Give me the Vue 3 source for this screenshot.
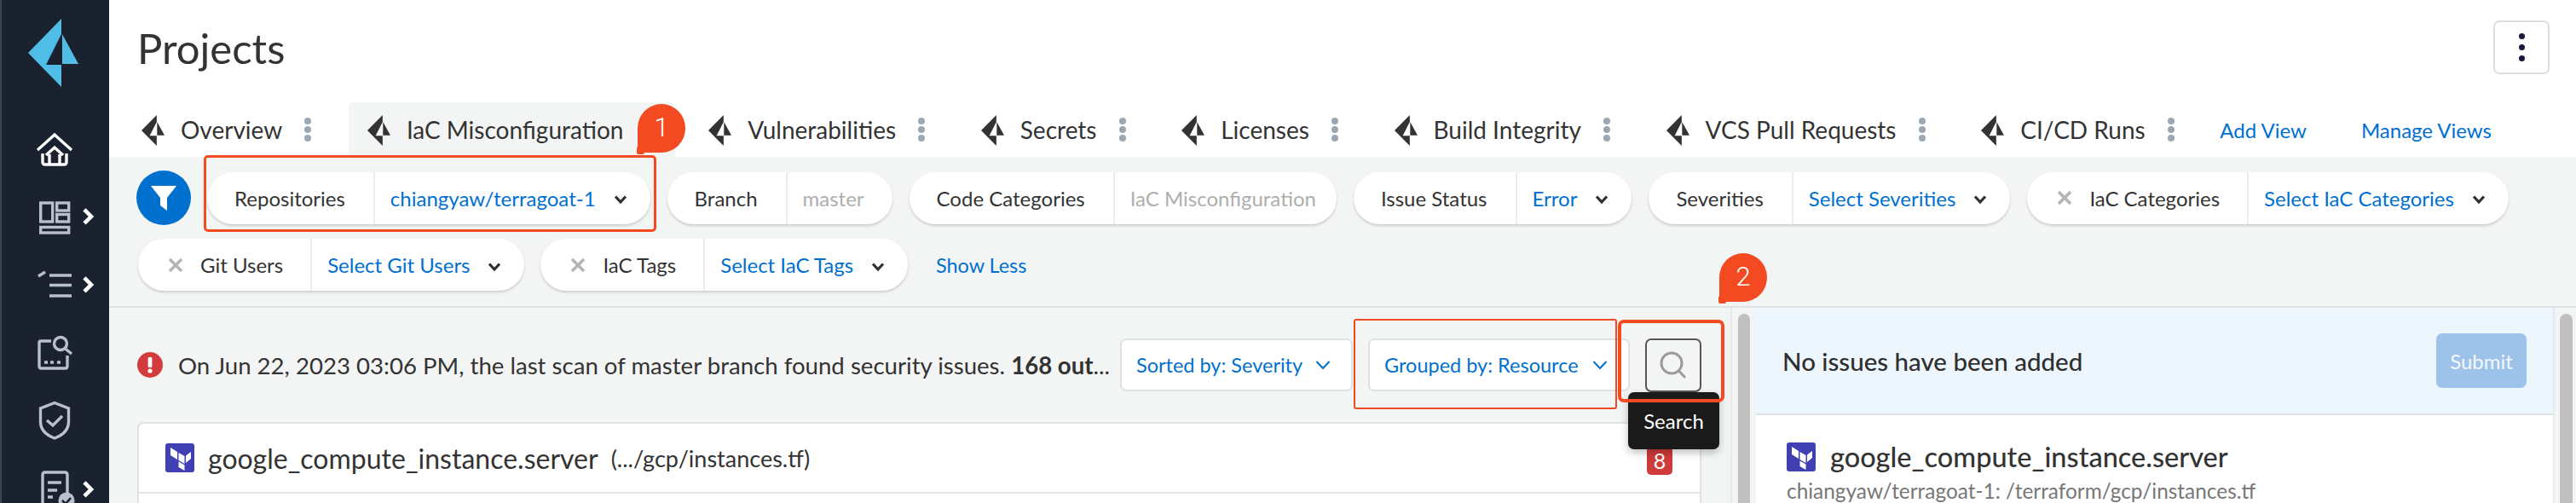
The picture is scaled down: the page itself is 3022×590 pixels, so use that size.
<script setup>
const tabs = [
  { name: 'Overview' },
  { name: 'IaC Misconfiguration', active: true },
  { name: 'Vulnerabilities' },
  { name: 'Secrets' },
  { name: 'Licenses' },
  { name: 'Build Integrity' },
  { name: 'VCS Pull Requests' },
  { name: 'CI/CD Runs' }
]
const row1 = [
  { label: 'Repositories', value: 'chiangyaw/terragoat-1', chevron: true },
  { label: 'Branch', value: 'master', muted: true },
  { label: 'Code Categories', value: 'IaC Misconfiguration', muted: true, tight: true },
  { label: 'Issue Status', value: 'Error', chevron: true },
  { label: 'Severities', value: 'Select Severities', chevron: true },
  { label: 'IaC Categories', value: 'Select IaC Categories', chevron: true, close: true }
]
const row2 = [
  { label: 'Git Users', value: 'Select Git Users', chevron: true, close: true },
  { label: 'IaC Tags', value: 'Select IaC Tags', chevron: true, close: true }
]
</script>

<template>
  <div class="app">
    <aside class="sidebar">
      <svg class="logo" viewBox="0 0 128 135">
        <polygon points="72,22 33,62 72,102 72,76 54,76 72,40" fill="#4fbde6" />
        <polygon points="73,40 92,75 73,75" fill="#4fbde6" />
      </svg>
      <nav class="nav">
        <svg class="nav-icon" viewBox="0 0 128 79.6">
          <g fill="none" stroke="#fff" stroke-width="3.4">
            <path d="M44 41 L64 23 L84 41" />
            <path d="M50 45 V55 Q50 58 53 58 H75 Q78 58 78 55 V45" />
            <path d="M54 47 L64 38 L74 47 M58 46 V57 M70 46 V57" />
          </g>
        </svg>
        <svg class="nav-icon" viewBox="0 0 128 79.6">
          <g fill="none" stroke="#b9bfcc" stroke-width="3.4">
            <rect x="47.7" y="23" width="14" height="22" />
            <rect x="66.7" y="23" width="14" height="9" />
            <rect x="66.7" y="36.5" width="14" height="8.5" />
            <rect x="47.7" y="51.5" width="33" height="6.5" />
          </g>
          <path d="M99 31 L107 39 L99 47" fill="none" stroke="#fff" stroke-width="4.6" />
        </svg>
        <svg class="nav-icon" viewBox="0 0 128 79.6">
          <g fill="none" stroke="#b9bfcc" stroke-width="3.4">
            <path d="M58 29 H84 M58 40.5 H84 M58 53 H84" />
            <path d="M45 30 L53 25" />
          </g>
          <path d="M99 32 L107 40 L99 48" fill="none" stroke="#fff" stroke-width="4.6" />
        </svg>
        <svg class="nav-icon" viewBox="0 0 128 79.6">
          <g fill="none" stroke="#b9bfcc" stroke-width="3.4">
            <path d="M60 26 H48 Q46 26 46 28 V55 Q46 58 48 58 H77 Q79 58 79 55 V43" />
            <circle cx="71" cy="29" r="7.5" />
            <path d="M76.5 35 L84 41" />
            <path d="M52 51 H56 M59 51 H63 M67 51 H71" />
          </g>
        </svg>
        <svg class="nav-icon" viewBox="0 0 128 79.6">
          <g fill="none" stroke="#b9bfcc" stroke-width="3.4">
            <path d="M64 19.5 L80.5 26 V42 C80.5 52 72 58 64 61 C56 58 47.5 52 47.5 42 V26 Z" />
            <path d="M55 40 L62 46 L73 35" />
          </g>
        </svg>
        <svg class="nav-icon" viewBox="0 0 128 79.6">
          <g fill="none" stroke="#b9bfcc" stroke-width="3.4">
            <path d="M50 85 V24 Q50 21 53 21 H76 Q79 21 79 24 V45" />
            <path d="M56 33 H72 M56 42 H67 M56 50 H62" />
          </g>
          <circle cx="78" cy="54" r="9.5" fill="#b9bfcc" />
          <path d="M73 54 L77 58 L83 51" fill="none" stroke="#1a2230" stroke-width="2.6" />
          <path d="M99 33 L107 41 L99 49" fill="none" stroke="#fff" stroke-width="4.6" />
        </svg>
      </nav>
    </aside>

    <main class="main">
      <header class="titlebar">
        <h1 class="title">Projects</h1>
        <button class="kebab-btn">
          <span></span><span></span><span></span>
        </button>
      </header>

      <div class="tabs">
        <div v-for="t in tabs" :key="t.name" class="tab" :class="{ active: t.active }">
          <svg class="tab-icon" viewBox="33 22 59 80" preserveAspectRatio="none">
            <polygon points="72,22 33,62 72,102 72,76 54,76 72,40" fill="#333" />
            <polygon points="73,40 92,75 73,75" fill="#333" />
          </svg>
          <span class="tab-name">{{ t.name }}</span>
          <span class="tab-dots"><i></i><i></i><i></i></span>
        </div>
        <a class="link add-view">Add View</a>
        <a class="link manage-views">Manage Views</a>
      </div>

      <section class="filters">
        <div class="filter-row first">
          <div class="filter-btn">
            <svg viewBox="0 0 32 32" width="32" height="32">
              <path d="M1 2 H31 L20 16 V31 L12 25 V16 Z" fill="#fff" />
            </svg>
          </div>
          <div v-for="p in row1" :key="p.label" class="pill">
            <div class="pill-label" :class="{ closable: p.close }">
              <svg v-if="p.close" class="close" viewBox="0 0 18 18" width="18" height="18">
                <path d="M2 2 L16 16 M16 2 L2 16" stroke="#b4b4b4" stroke-width="3.6" />
              </svg>
              {{ p.label }}
            </div>
            <div class="pill-value" :class="{ muted: p.muted, tight: p.tight }">
              {{ p.value }}
              <svg v-if="p.chevron" class="chev" viewBox="0 0 16 12" width="16" height="12">
                <path d="M2 2.5 L8 9 L14 2.5" fill="none" stroke="#2f2f2f" stroke-width="3.2" />
              </svg>
            </div>
          </div>
        </div>
        <div class="filter-row second">
          <div v-for="p in row2" :key="p.label" class="pill">
            <div class="pill-label closable">
              <svg class="close" viewBox="0 0 18 18" width="18" height="18">
                <path d="M2 2 L16 16 M16 2 L2 16" stroke="#b4b4b4" stroke-width="3.6" />
              </svg>
              {{ p.label }}
            </div>
            <div class="pill-value">
              {{ p.value }}
              <svg class="chev" viewBox="0 0 16 12" width="16" height="12">
                <path d="M2 2.5 L8 9 L14 2.5" fill="none" stroke="#2f2f2f" stroke-width="3.2" />
              </svg>
            </div>
          </div>
          <a class="link show-less">Show Less</a>
        </div>
      </section>

      <div class="content">
        <section class="left">
          <div class="message-row">
            <svg class="alert" viewBox="0 0 30 30" width="30" height="30">
              <circle cx="15" cy="15" r="15" fill="#d13b3b" />
              <rect x="12.6" y="6" width="4.8" height="12" rx="1.4" fill="#fff" />
              <circle cx="15" cy="22" r="2.6" fill="#fff" />
            </svg>
            <p class="message">On Jun 22, 2023 03:06 PM, the last scan of master branch found security issues. <b>168 out</b>...</p>
            <div class="select sorted">
              Sorted by: Severity
              <svg viewBox="0 0 18 12" width="18" height="12"><path d="M1.5 2 L9 10 L16.5 2" fill="none" stroke="#0070cf" stroke-width="2" /></svg>
            </div>
            <div class="select grouped">
              Grouped by: Resource
              <svg viewBox="0 0 18 12" width="18" height="12"><path d="M1.5 2 L9 10 L16.5 2" fill="none" stroke="#0070cf" stroke-width="2" /></svg>
            </div>
            <div class="search-btn">
              <svg viewBox="0 0 34 34" width="34" height="34">
                <circle cx="15" cy="15" r="12" fill="none" stroke="#9a9a9a" stroke-width="3" />
                <path d="M23.5 24 L31 32" stroke="#9a9a9a" stroke-width="3" />
              </svg>
            </div>
          </div>
          <div class="card">
            <div class="card-row">
              <svg class="tf" viewBox="0 0 34 34" width="34" height="34">
                <rect width="34" height="34" rx="3" fill="#4040b2" />
                <polygon points="6,5 14,10 14,19 6,14" fill="#fff" />
                <polygon points="15.5,11 22.5,15 22.5,24 15.5,20" fill="#fff" />
                <polygon points="24,14.5 30,10 30,18 24,23" fill="#fff" />
                <polygon points="15.5,21.5 22.5,25.5 22.5,32 15.5,28" fill="#fff" />
              </svg>
              <span class="res-name">google_compute_instance.server</span>
              <span class="res-path">(.../gcp/instances.tf)</span>
              <span class="count">8</span>
            </div>
          </div>
        </section>
        <div class="scroll"><div class="thumb"></div></div>
        <section class="right">
          <div class="added">
            <span class="added-text">No issues have been added</span>
            <button class="submit">Submit</button>
          </div>
          <div class="detail">
            <div class="detail-title">
              <svg class="tf" viewBox="0 0 34 34" width="34" height="34">
                <rect width="34" height="34" rx="3" fill="#4040b2" />
                <polygon points="6,5 14,10 14,19 6,14" fill="#fff" />
                <polygon points="15.5,11 22.5,15 22.5,24 15.5,20" fill="#fff" />
                <polygon points="24,14.5 30,10 30,18 24,23" fill="#fff" />
                <polygon points="15.5,21.5 22.5,25.5 22.5,32 15.5,28" fill="#fff" />
              </svg>
              <span>google_compute_instance.server</span>
            </div>
            <div class="detail-path">chiangyaw/terragoat-1: /terraform/gcp/instances.tf</div>
          </div>
        </section>
        <div class="scroll end"><div class="thumb"></div></div>
      </div>
    </main>

    <!-- annotations laid over the screenshot -->
    <div class="mark m1"></div>
    <div class="mark m2"></div>
    <div class="mark m3"></div>
    <div class="callout c1">1</div>
    <div class="callout c2">2</div>
    <div class="tooltip">Search</div>
  </div>
</template>

<style>
html, body { margin: 0; background: #fff; }
</style>

<style scoped>
.app {
  position: relative;
  display: flex;
  width: 3022px;
  height: 590px;
  overflow: hidden;
  font-family: Lato, "Liberation Sans", sans-serif;
  color: #333;
  background: #fff;
}
.sidebar {
  flex: 0 0 128px;
  box-sizing: border-box;
  background: #1a2230;
  box-shadow: inset 2px 0 0 #3c4551;
  display: flex;
  flex-direction: column;
  overflow: hidden;
}
.logo { display: block; width: 128px; height: 135px; flex: none; }
.nav { display: flex; flex-direction: column; flex: none; }
.nav-icon { display: block; width: 128px; height: 79.6px; flex: none; overflow: hidden; }

.main { flex: 1; min-width: 0; display: flex; flex-direction: column; }
.titlebar {
  height: 120px;
  flex: none;
  display: flex;
  justify-content: space-between;
  align-items: flex-start;
  padding: 0 31px 0 33px;
  box-sizing: border-box;
}
.title { margin: 26px 0 0; font-size: 49px; line-height: 60px; font-weight: 400; color: #333; }
.kebab-btn {
  margin-top: 24px;
  width: 66px;
  height: 63px;
  box-sizing: border-box;
  border: 2px solid #dcdfe0;
  border-radius: 7px;
  background: #fff;
  display: flex;
  flex-direction: column;
  align-items: center;
  justify-content: center;
  gap: 6px;
  padding: 0;
}
.kebab-btn span { width: 7px; height: 7px; border-radius: 50%; background: #1c1640; }

.tabs { height: 64px; flex: none; display: flex; align-items: stretch; padding-left: 16px; font-size: 28px; }
.tab {
  display: flex;
  align-items: center;
  padding: 0 27px 0 22px;
  margin-right: 16.7px;
  border-radius: 6px 6px 0 0;
}
.tab.active { background: #f3f5f5; }
.tab-icon { width: 27px; height: 36px; margin-top: 2px; flex: none; }
.tab-name { margin-left: 19px; white-space: nowrap; color: #333; }
.tab-dots { margin-left: 26px; width: 8px; display: flex; flex-direction: column; gap: 2px; }
.tab-dots i { display: block; width: 8px; height: 8px; border-radius: 50%; background: #9aa8b6; }
.link { color: #0070cf; font-size: 24px; white-space: nowrap; }
.add-view { align-self: center; margin-left: 10px; }
.manage-views { align-self: center; margin-left: 64px; }

.filters {
  flex: none;
  height: 177px;
  box-sizing: border-box;
  background: #f3f5f5;
  border-bottom: 2px solid #dfe3e3;
  padding: 16px 0 0 32px;
  display: flex;
  flex-direction: column;
  gap: 16px;
}
.filter-row { display: flex; align-items: center; gap: 20px; }
.filter-row.second { margin-left: 2px; gap: 19px; }
.filter-btn {
  width: 64px;
  height: 64px;
  margin-right: -1px;
  flex: none;
  border-radius: 50%;
  background: #0070cf;
  display: flex;
  align-items: center;
  justify-content: center;
}
.pill {
  display: flex;
  height: 61px;
  flex: none;
  background: #fff;
  border-radius: 31px;
  box-shadow: 0 2px 3px rgba(0, 0, 0, .16);
  font-size: 24px;
  white-space: nowrap;
}
.pill-label {
  display: flex;
  align-items: center;
  padding: 0 33px 0 32px;
  border-right: 2px solid #eceeee;
  color: #333;
}
.pill-label.closable { padding: 0 32px 0 35px; }
.close { margin-right: 20px; flex: none; }
.pill-value {
  display: flex;
  align-items: center;
  padding: 0 33px 0 18px;
  color: #0070cf;
}
.pill-value:has(.chev) { padding-right: 27px; }
.pill-value.muted { color: #aeaeae; }
.pill-value.tight { padding-right: 24px; }
.chev { margin-left: 21px; margin-top: 4px; flex: none; }
.show-less { margin-left: 14px; font-size: 23.4px; }

.content { flex: 1; min-height: 0; display: flex; background: #f3f5f5; }
.left { width: 1902px; flex: none; box-sizing: border-box; padding: 0 34px 0 33px; }
.message-row { height: 134px; display: flex; align-items: center; font-size: 27.6px; }
.alert { flex: none; margin-right: 18px; }
.message {
  flex: 1;
  min-width: 0;
  margin: 0;
  white-space: nowrap;
}
.select {
  flex: none;
  height: 62px;
  box-sizing: border-box;
  background: #fff;
  border: 2px solid #dfe2e2;
  border-radius: 7px;
  display: flex;
  align-items: center;
  justify-content: space-between;
  padding: 0 24px 0 17px;
  color: #0070cf;
  font-size: 23.5px;
}
.select svg { flex: none; }
.sorted { width: 273px; margin-right: 18px; }
.grouped { width: 307px; margin-right: 18px; padding-right: 24px; }
.search-btn {
  flex: none;
  width: 66px;
  height: 63px;
  box-sizing: border-box;
  border: 2px solid #555;
  border-radius: 7px;
  display: flex;
  align-items: center;
  justify-content: center;
}
.card {
  background: #fff;
  border: 2px solid #e0e2e2;
  border-radius: 7px 7px 0 0;
  height: 120px;
  box-sizing: border-box;
}
.card-row {
  height: 82px;
  box-sizing: border-box;
  border-bottom: 2px solid #e4e6e6;
  display: flex;
  align-items: center;
  padding: 0 32px 0 31px;
}
.tf { flex: none; }
.res-name { margin-left: 16px; font-size: 32px; }
.res-path { margin-left: 15px; font-size: 27px; }
.count {
  margin-left: auto;
  width: 30px;
  height: 34px;
  margin-top: 6px;
  border-radius: 5px;
  background: #cf3a3a;
  color: #fff;
  font-size: 25px;
  line-height: 34px;
  text-align: center;
}
.scroll {
  flex: 0 0 30px;
  box-sizing: border-box;
  padding: 7px 7px 0;
  border-left: 2px solid #e8eaea;
  background: #f3f5f5;
}
.scroll.end { flex-basis: 27px; padding: 7px 4px 0 6px; }
.thumb { height: 100%; border-radius: 8px 8px 0 0; background: #c0c0c0; }
.right { width: 935px; flex: none; display: flex; flex-direction: column; background: #fff; }
.added {
  height: 126px;
  flex: none;
  box-sizing: border-box;
  background: #eef6fd;
  border-bottom: 2px solid #dde3e5;
  display: flex;
  align-items: center;
  justify-content: space-between;
  padding: 0 31px 0 31px;
}
.added-text { font-size: 29.5px; font-weight: 500; color: #2f2f2f; }
.submit {
  width: 106px;
  height: 64px;
  border: none;
  border-radius: 7px;
  background: #9dc3ea;
  color: #f3f8fd;
  font-family: inherit;
  font-size: 24px;
  padding: 0;
}
.detail { padding: 32px 0 0 36px; }
.detail-title { display: flex; align-items: center; gap: 17px; font-size: 32.5px; font-weight: 500; color: #333; line-height: 34px; }
.detail-path { margin-top: 9px; font-size: 24.4px; color: #777; line-height: 28px; }

.mark { position: absolute; box-sizing: border-box; border: 3px solid #f44a22; border-radius: 5px; }
.m1 { left: 239px; top: 182px; width: 531px; height: 90px; }
.m2 { left: 1588px; top: 374px; width: 309px; height: 106px; border-width: 2px; border-radius: 3px; }
.m3 { left: 1898px; top: 375px; width: 125px; height: 97px; border-width: 4px; border-radius: 7px; z-index: 3; }
.callout {
  position: absolute;
  width: 56px;
  height: 57px;
  box-sizing: border-box;
  background: #f44a22;
  border-radius: 50% 50% 50% 5px;
  color: #fff;
  font-family: Roboto, "Liberation Sans", sans-serif;
  font-size: 31px;
  font-weight: 300;
  line-height: 56px;
  text-align: center;
}
.callout::after {
  content: "";
  position: absolute;
  left: -1px;
  bottom: -2px;
  width: 9px;
  height: 9px;
  border-radius: 2px;
  background: #f44a22;
}
.c1 { left: 748px; top: 122px; }
.c2 { left: 2017px; top: 297px; }
.tooltip {
  position: absolute;
  left: 1910px;
  top: 460px;
  width: 107px;
  height: 67px;
  box-sizing: border-box;
  border-radius: 7px;
  background: #1a1a1a;
  box-shadow: 0 4px 10px rgba(0, 0, 0, .25);
  color: #fff;
  font-size: 24px;
  line-height: 67px;
  text-align: center;
  z-index: 2;
}
</style>
